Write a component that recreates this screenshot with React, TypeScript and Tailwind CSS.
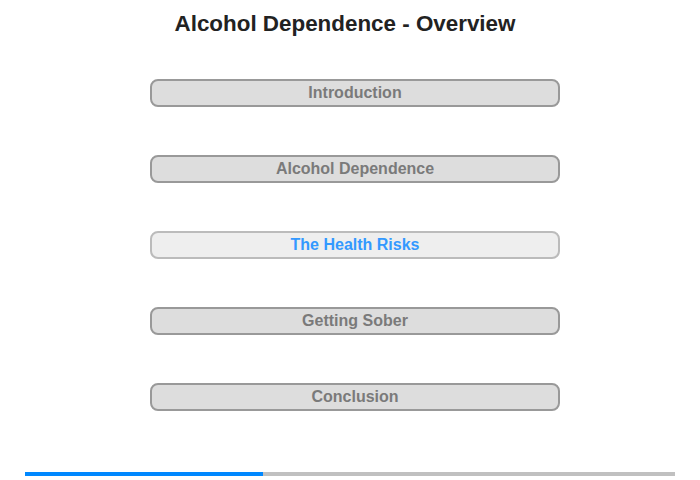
const sections = [
  { label: "Introduction", active: false },
  { label: "Alcohol Dependence", active: false },
  { label: "The Health Risks", active: true },
  { label: "Getting Sober", active: false },
  { label: "Conclusion", active: false },
];

const App = () => {
  const progress = 238 / 650;

  return (
    <div className="w-[700px] h-[480px] bg-white font-['Liberation_Sans',Arial,sans-serif] flex flex-col">
      <h1 className="pt-[10px] h-[37px] text-center text-[22.4px] leading-[28px] font-bold text-[#222] pr-[10px]">
        Alcohol Dependence - Overview
      </h1>

      <div className="mt-[42px] flex flex-col gap-[48px] pl-[150px]">
        {sections.map((s) => (
          <button
            key={s.label}
            className={
              s.active
                ? "w-[410px] h-[28px] pb-0 rounded-[8px] border-2 border-[#bbbbbb] bg-[#eeeeee] text-[16px] font-bold text-[#3399ff] leading-none"
                : "w-[410px] h-[28px] pb-0 rounded-[8px] border-2 border-[#999999] bg-[#dddddd] text-[16px] font-bold text-[#7a7a7a] leading-none"
            }
          >
            {s.label}
          </button>
        ))}
      </div>

      <div className="mt-[61px] mx-[25px] h-[4px] bg-[#c0c0c0]">
        <div className="h-full bg-[#0088ff]" style={{ width: `${progress * 100}%` }} />
      </div>
    </div>
  );
};

export default App;
